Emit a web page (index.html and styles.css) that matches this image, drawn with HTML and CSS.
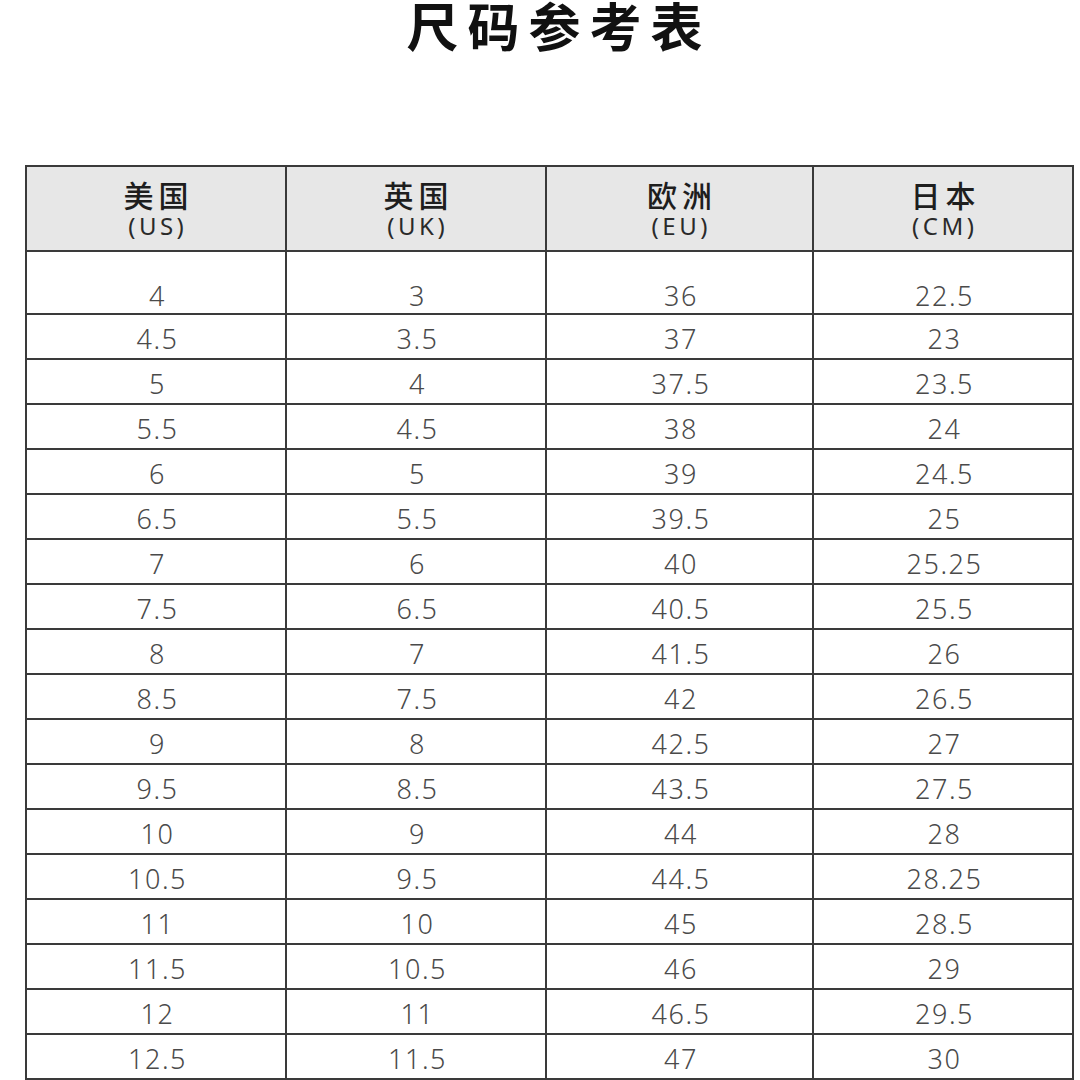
FILE: index.html
```html
<!DOCTYPE html>
<html lang="zh-CN">
<head>
<meta charset="utf-8">
<title>尺码参考表</title>
<link rel="stylesheet" href="styles.css">
</head>
<body>
<h1 class="title">尺码参考表</h1>
<table class="size-table">
  <colgroup>
    <col class="col-a"><col class="col-b"><col class="col-c"><col class="col-d">
  </colgroup>
  <thead>
    <tr class="head-row">
      <th><span class="zh">美国</span><span class="en">(US)</span></th>
      <th><span class="zh">英国</span><span class="en">(UK)</span></th>
      <th><span class="zh">欧洲</span><span class="en">(EU)</span></th>
      <th><span class="zh">日本</span><span class="en">(CM)</span></th>
    </tr>
  </thead>
  <tbody>
    <tr class="first-row"><td>4</td><td>3</td><td>36</td><td>22.5</td></tr>
    <tr><td>4.5</td><td>3.5</td><td>37</td><td>23</td></tr>
    <tr><td>5</td><td>4</td><td>37.5</td><td>23.5</td></tr>
    <tr><td>5.5</td><td>4.5</td><td>38</td><td>24</td></tr>
    <tr><td>6</td><td>5</td><td>39</td><td>24.5</td></tr>
    <tr><td>6.5</td><td>5.5</td><td>39.5</td><td>25</td></tr>
    <tr><td>7</td><td>6</td><td>40</td><td>25.25</td></tr>
    <tr><td>7.5</td><td>6.5</td><td>40.5</td><td>25.5</td></tr>
    <tr><td>8</td><td>7</td><td>41.5</td><td>26</td></tr>
    <tr><td>8.5</td><td>7.5</td><td>42</td><td>26.5</td></tr>
    <tr><td>9</td><td>8</td><td>42.5</td><td>27</td></tr>
    <tr><td>9.5</td><td>8.5</td><td>43.5</td><td>27.5</td></tr>
    <tr><td>10</td><td>9</td><td>44</td><td>28</td></tr>
    <tr><td>10.5</td><td>9.5</td><td>44.5</td><td>28.25</td></tr>
    <tr><td>11</td><td>10</td><td>45</td><td>28.5</td></tr>
    <tr><td>11.5</td><td>10.5</td><td>46</td><td>29</td></tr>
    <tr><td>12</td><td>11</td><td>46.5</td><td>29.5</td></tr>
    <tr><td>12.5</td><td>11.5</td><td>47</td><td>30</td></tr>
  </tbody>
</table>
</body>
</html>
```
FILE: styles.css
```css
html, body {
  margin: 0;
  padding: 0;
  background: #ffffff;
}
body {
  width: 1080px;
  height: 1080px;
  overflow: hidden;
  font-family: "Noto Sans", "Noto Sans CJK SC", sans-serif;
}
.title {
  margin: 0;
  padding: 0 0 0 38px;
  height: 165px;
  box-sizing: border-box;
  text-align: center;
  font-family: "Noto Sans CJK SC", sans-serif;
  font-weight: 700;
  font-size: 52px;
  line-height: 50px;
  letter-spacing: 9px;
  color: #111;
}
.size-table {
  margin-left: 25px;
  width: 1049px;
  border-collapse: collapse;
  table-layout: fixed;
  color: #4a4a4a;
}
.size-table th, .size-table td {
  border: 2px solid #3a3a3a;
  padding: 0;
  text-align: center;
}
.col-a, .col-b, .col-d { width: 260px; }
.col-c { width: 267px; }
.head-row { height: 85px; }
.head-row th {
  background: #e7e7e7;
  font-weight: 500;
  color: #1e1e1e;
  vertical-align: top;
  padding-top: 10px;
}
.zh {
  display: block;
  font-family: "Noto Sans CJK SC", sans-serif;
  font-size: 30px;
  line-height: 34px;
  letter-spacing: 5px;
  padding-left: 5px;
  font-weight: 500;
}
.en {
  display: block;
  font-family: "Noto Sans", sans-serif;
  font-size: 24px;
  line-height: 30px;
  letter-spacing: 3.5px;
  padding-left: 3.5px;
  font-weight: 400;
  color: #2a2a2a;
}
.size-table td {
  height: 45px;
  font-size: 27px;
  font-weight: 300;
  line-height: 30px;
  letter-spacing: 1.5px;
  padding-top: 5px;
  padding-left: 3px;
  vertical-align: middle;
  box-sizing: border-box;
}
.first-row td {
  height: 63px;
  vertical-align: bottom;
  padding-bottom: 2px;
}
```
